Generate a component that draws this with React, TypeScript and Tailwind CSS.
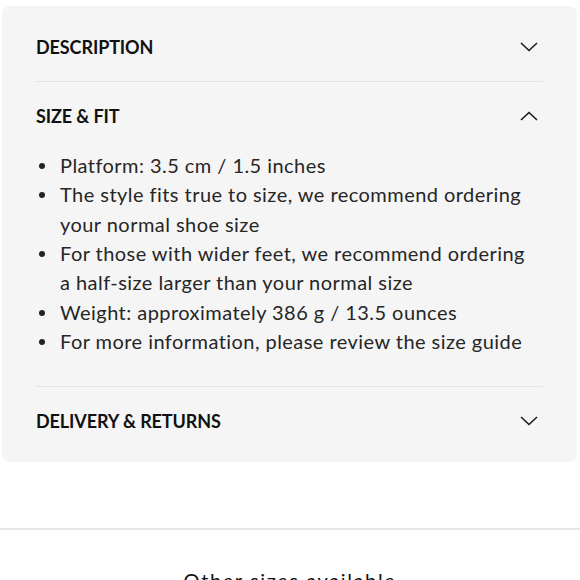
import React from "react";

const Chevron = ({ up = false }: { up?: boolean }) => (
  <svg width="18" height="10" viewBox="0 0 18 10" fill="none" className="shrink-0">
    <polyline
      points={up ? "1,9 9,1.5 17,9" : "1,1 9,8.5 17,1"}
      stroke="#1a1a1a"
      strokeWidth="1.6"
      fill="none"
    />
  </svg>
);

const Row = ({ title, up = false }: { title: string; up?: boolean }) => (
  <div className="h-[68px] flex items-center justify-between pr-[39px]">
    <span className="text-[18px] font-bold text-[#111] tracking-[-0.1px]" style={{ fontFamily: "Lato, sans-serif" }}>
      {title}
    </span>
    <Chevron up={up} />
  </div>
);

const items = [
  ["Platform: 3.5 cm / 1.5 inches"],
  ["The style fits true to size, we recommend ordering", "your normal shoe size"],
  ["For those with wider feet, we recommend ordering", "a half-size larger than your normal size"],
  ["Weight: approximately 386 g / 13.5 ounces"],
  ["For more information, please review the size guide"],
];

export default function App() {
  return (
    <div className="w-[580px] h-[580px] bg-white overflow-hidden relative">
      <div className="pt-[6px] pl-[2px] pr-[3px]">
        <div className="bg-[#f5f5f5] rounded-[8px] py-[7px] pl-[34px]">
          <Row title="DESCRIPTION" />
          <div className="h-px bg-[#e3e3e3] mr-[34px]" />
          <Row title="SIZE & FIT" up />
          <ul
            className="pt-[1px] pb-[30px] text-[20px] leading-[29.33px] text-[#262626] tracking-[0.45px]"
            style={{ fontFamily: "Lato, sans-serif" }}
          >
            {items.map((lines, i) => (
              <li key={i} className="flex">
                <span className="w-[24px] shrink-0 flex justify-start pl-[3px]">
                  <span className="mt-[12px] w-[6px] h-[6px] rounded-full bg-[#222]" />
                </span>
                <span>
                  {lines.map((l, j) => (
                    <span key={j} className="block">
                      {l}
                    </span>
                  ))}
                </span>
              </li>
            ))}
          </ul>
          <div className="h-px bg-[#e3e3e3] mr-[34px]" />
          <Row title="DELIVERY & RETURNS" />
        </div>
      </div>
      <div className="mt-[66px] h-[2px] bg-[#e6e6e6]" />
      <div
        className="mt-[35px] text-center text-[20px] text-[#111] tracking-[1.6px]"
        style={{ fontFamily: "Lato, sans-serif" }}
      >
        Other sizes available
      </div>
    </div>
  );
}
